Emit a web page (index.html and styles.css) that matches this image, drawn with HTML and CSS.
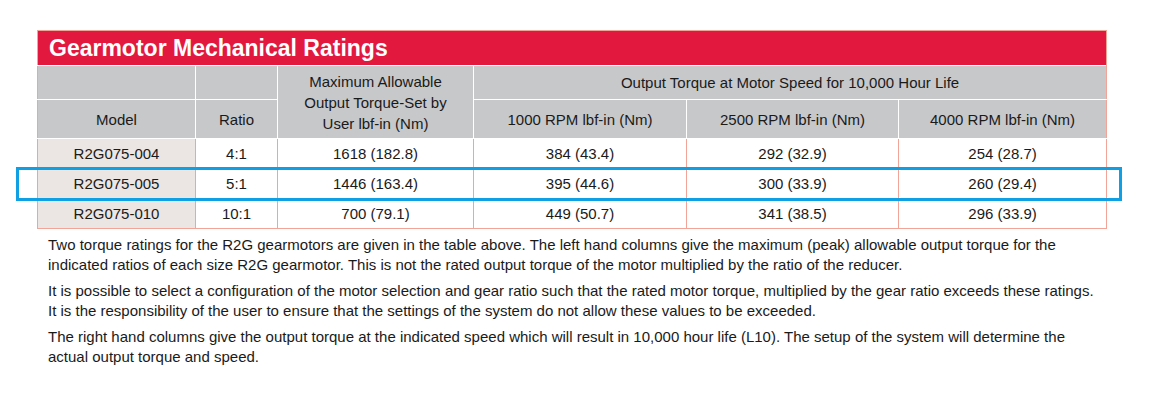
FILE: index.html
```html
<!DOCTYPE html>
<html>
<head>
<meta charset="utf-8">
<link rel="stylesheet" href="styles.css">
</head>
<body>
<div class="page">
  <div class="table-wrap">
    <table class="ratings">
      <colgroup>
        <col class="w-model">
        <col class="w-ratio">
        <col class="w-max">
        <col class="w-rpm1">
        <col class="w-rpm2">
        <col class="w-rpm3">
      </colgroup>
      <tr class="title-row"><th colspan="6" class="title">Gearmotor Mechanical Ratings</th></tr>
      <tr class="head1">
        <th></th>
        <th></th>
        <th class="c-max" rowspan="2">Maximum Allowable<br>Output Torque-Set by<br>User lbf-in (Nm)</th>
        <th colspan="3">Output Torque at Motor Speed for 10,000 Hour Life</th>
      </tr>
      <tr class="head2">
        <th>Model</th>
        <th>Ratio</th>
        <th>1000 RPM lbf-in (Nm)</th>
        <th>2500 RPM lbf-in (Nm)</th>
        <th>4000 RPM lbf-in (Nm)</th>
      </tr>
      <tr class="row">
        <td class="model">R2G075-004</td><td>4:1</td><td>1618 (182.8)</td><td>384 (43.4)</td><td>292 (32.9)</td><td>254 (28.7)</td>
      </tr>
      <tr class="row">
        <td class="model">R2G075-005</td><td>5:1</td><td>1446 (163.4)</td><td>395 (44.6)</td><td>300 (33.9)</td><td>260 (29.4)</td>
      </tr>
      <tr class="row">
        <td class="model">R2G075-010</td><td>10:1</td><td>700 (79.1)</td><td>449 (50.7)</td><td>341 (38.5)</td><td>296 (33.9)</td>
      </tr>
    </table>
    <div class="highlight"></div>
  </div>
  <div class="notes">
    <p>Two torque ratings for the R2G gearmotors are given in the table above. The left hand columns give the maximum (peak) allowable output torque for the<br>indicated ratios of each size R2G gearmotor. This is not the rated output torque of the motor multiplied by the ratio of the reducer.</p>
    <p>It is possible to select a configuration of the motor selection and gear ratio such that the rated motor torque, multiplied by the gear ratio exceeds these ratings.<br>It is the responsibility of the user to ensure that the settings of the system do not allow these values to be exceeded.</p>
    <p>The right hand columns give the output torque at the indicated speed which will result in 10,000 hour life (L10). The setup of the system will determine the<br>actual output torque and speed.</p>
  </div>
</div>
</body>
</html>
```
FILE: styles.css
```css
html, body {
  margin: 0;
  padding: 0;
  background: #ffffff;
}
body {
  font-family: "Liberation Sans", Arial, sans-serif;
  color: #1a1a1a;
}
.page {
  padding: 30px 0 0 37px;
}
.table-wrap {
  position: relative;
  width: 1069px;
}
.ratings {
  border-collapse: collapse;
  width: 1069px;
  table-layout: fixed;
  border: 1px solid #f2a498;
  font-size: 15px;
}
.w-model { width: 158px; }
.w-ratio { width: 82px; }
.w-max { width: 196px; }
.w-rpm1 { width: 213px; }
.w-rpm2 { width: 212px; }
.w-rpm3 { width: 208px; }
.ratings th, .ratings td {
  padding: 0;
  text-align: center;
  font-weight: normal;
}
.ratings th.title {
  background: #e3183e;
  color: #ffffff;
  font-weight: bold;
  font-size: 23px;
  text-align: left;
  padding-left: 11px;
  height: 34px;
}
.head1 th, .head2 th {
  background: #c7c8ca;
  border: 1px solid #ffffff;
  color: #1a1a1a;
}
.head1 th:last-child, .head2 th:last-child { border-right-color: #f2a498; }
.head1 th:first-child, .head2 th:first-child { border-left-color: #f2a498; }
.head1 th { height: 33px; }
.head2 th { height: 38px; }
.ratings th.c-max { line-height: 21px; padding-top: 1px; }
.row td {
  border: 1px solid #f2a498;
  height: 29px;
  color: #1a1a1a;
}
.row td.model { background: #ebe6e3; }
.highlight {
  position: absolute;
  left: -21px;
  top: 137px;
  width: 1100px;
  height: 28px;
  border: 3px solid #0ea0e2;
  pointer-events: none;
}
.notes {
  padding-left: 11px;
  padding-top: 6px;
  font-size: 15px;
  line-height: 20px;
}
.notes p {
  margin: 0 0 6px 0;
  white-space: nowrap;
}
```
